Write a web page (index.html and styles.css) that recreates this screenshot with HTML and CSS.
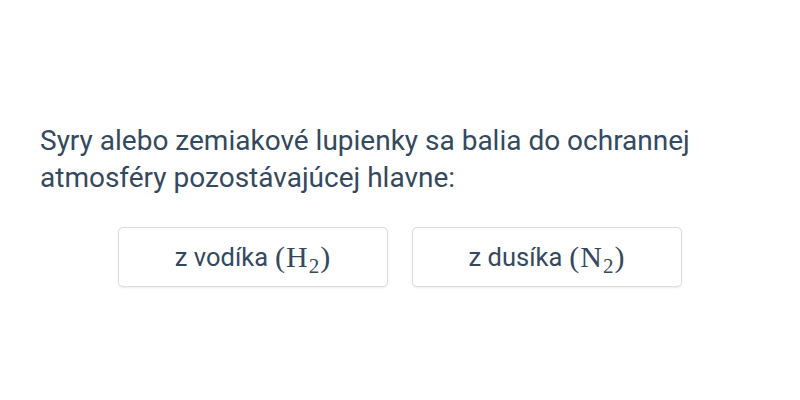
FILE: index.html
```html
<!DOCTYPE html>
<html lang="sk">
<head>
<meta charset="utf-8">
<link rel="stylesheet" href="styles.css">
</head>
<body>
<main class="page">
  <p class="question">Syry alebo zemiakové lupienky sa balia do ochrannej atmosféry pozostávajúcej hlavne:</p>
  <div class="options">
    <button class="option">z vodíka <span class="math">(H<sub>2</sub>)</span></button>
    <button class="option">z dusíka <span class="math">(N<sub>2</sub>)</span></button>
  </div>
</main>
</body>
</html>
```
FILE: styles.css
```css
html, body {
  margin: 0;
  padding: 0;
  background: #ffffff;
}
.page {
  width: 800px;
  height: 400px;
  box-sizing: border-box;
  padding: 122px 40px 0 40px;
  font-family: Roboto, "Liberation Sans", sans-serif;
  color: #34495e;
}
.question {
  margin: 0;
  font-size: 28px;
  line-height: 37px;
  width: 700px;
}
.options {
  display: flex;
  justify-content: center;
  gap: 24px;
  margin-top: 31px;
}
.option {
  width: 270px;
  height: 60px;
  box-sizing: border-box;
  background: #ffffff;
  border: 1px solid #dcdcdc;
  border-radius: 5px;
  box-shadow: 0 1px 2px rgba(0,0,0,0.08);
  font-family: Roboto, "Liberation Sans", sans-serif;
  font-size: 25.5px;
  color: #34495e;
  padding: 0;
  display: flex;
  align-items: center;
  justify-content: center;
  gap: 7px;
}
.math {
  font-family: "Liberation Serif", "DejaVu Serif", serif;
  font-size: 30px;
  letter-spacing: 1px;
}
.math sub {
  font-size: 21px;
  vertical-align: -6px;
  line-height: 0;
}
```
